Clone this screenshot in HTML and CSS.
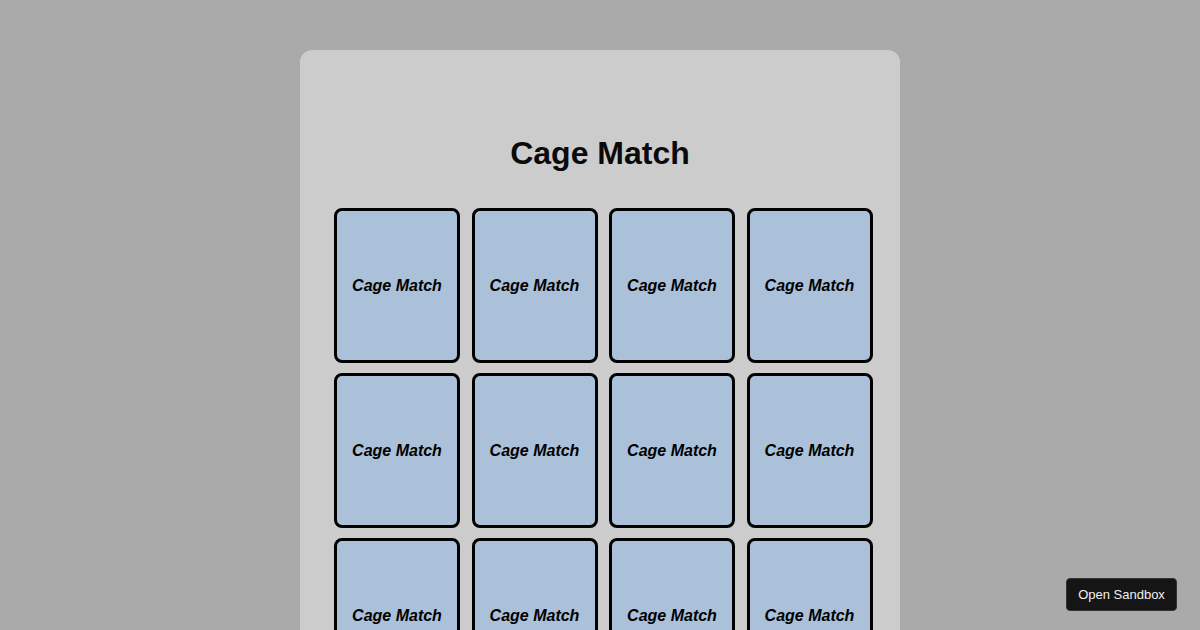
FILE: index.html
```html
<!DOCTYPE html>
<html>
<head>
<meta charset="utf-8">
<link rel="stylesheet" href="styles.css">
</head>
<body>
<div class="board">
  <h1 class="title">Cage Match</h1>
  <div class="grid">
    <div class="card"><span>Cage Match</span></div>
    <div class="card"><span>Cage Match</span></div>
    <div class="card"><span>Cage Match</span></div>
    <div class="card"><span>Cage Match</span></div>
    <div class="card"><span>Cage Match</span></div>
    <div class="card"><span>Cage Match</span></div>
    <div class="card"><span>Cage Match</span></div>
    <div class="card"><span>Cage Match</span></div>
    <div class="card"><span>Cage Match</span></div>
    <div class="card"><span>Cage Match</span></div>
    <div class="card"><span>Cage Match</span></div>
    <div class="card"><span>Cage Match</span></div>
  </div>
</div>
<button class="sandbox">Open Sandbox</button>
</body>
</html>
```

FILE: styles.css
```css
html, body {
  margin: 0;
  padding: 0;
  height: 100%;
  overflow: hidden;
}
body {
  background: #aaaaaa;
  font-family: "Liberation Sans", Arial, sans-serif;
}
.board {
  width: 600px;
  margin: 50px auto 0;
  background: #cccccc;
  border-radius: 12px;
  padding: 85px 0 40px;
  box-sizing: border-box;
}
.title {
  margin: 0;
  text-align: center;
  font-size: 32px;
  line-height: 37px;
  font-weight: bold;
  color: #0a0a0a;
}
.grid {
  margin-top: 36px;
  padding-left: 34px;
  display: grid;
  grid-template-columns: repeat(4, 126px);
  grid-auto-rows: 155px;
  column-gap: 11.5px;
  row-gap: 10px;
}
.card {
  box-sizing: border-box;
  border: 3px solid #000;
  border-radius: 8px;
  background: #abc0d9;
  display: flex;
  align-items: center;
  justify-content: center;
  font-size: 16px;
  font-weight: bold;
  font-style: italic;
  color: #000;
}
.sandbox {
  position: fixed;
  right: 23px;
  bottom: 19px;
  width: 111px;
  height: 33px;
  background: #151515;
  color: #f0f0f0;
  border: 1px solid #333;
  border-radius: 4px;
  font-family: "Liberation Sans", Arial, sans-serif;
  font-size: 13px;
  padding: 0;
}
```
